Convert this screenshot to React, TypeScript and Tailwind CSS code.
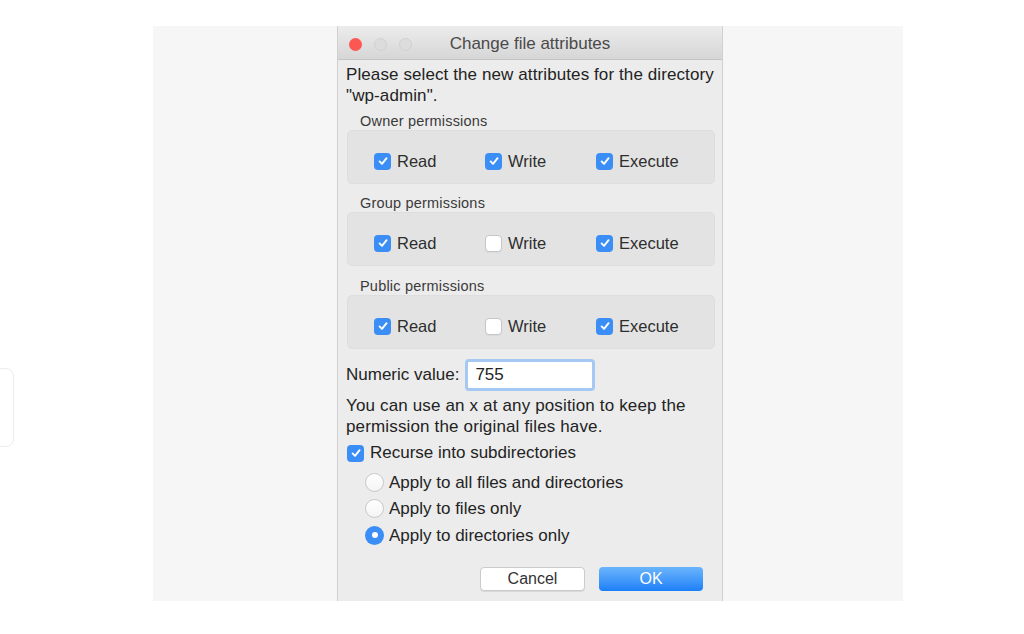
import React from "react"

const font = { fontFamily: '"Liberation Sans", Arial, sans-serif' }

function Check({ on }: { on: boolean }) {
  if (!on)
    return (
      <span className="h-[17px] w-[17px] shrink-0 rounded-[4px] border border-[#c6c6c6] bg-white shadow-[0_1px_0_rgba(0,0,0,0.04)]" />
    )
  return (
    <span className="flex h-[17px] w-[17px] shrink-0 items-center justify-center rounded-[4px] bg-[#3b8ef5]">
      <svg width="12" height="12" viewBox="0 0 12 12" fill="none">
        <path d="M2.6 6.4 L5 8.8 L9.6 3.2" stroke="white" strokeWidth="1.9" strokeLinecap="round" strokeLinejoin="round" />
      </svg>
    </span>
  )
}

function Radio({ on }: { on: boolean }) {
  if (on)
    return (
      <span className="flex h-[19px] w-[19px] shrink-0 items-center justify-center rounded-full bg-[#3b8ef5]">
        <span className="h-[6px] w-[6px] rounded-full bg-white" />
      </span>
    )
  return <span className="h-[19px] w-[19px] shrink-0 rounded-full border border-[#c8c8c8] bg-gradient-to-b from-white to-[#f4f4f4]" />
}

function Group({ title, perms, top }: { title: string; perms: boolean[]; top: string }) {
  const names = ["Read", "Write", "Execute"]
  return (
    <div className={top}>
      <div className="pl-[14px] text-[14.5px] leading-[18px] tracking-[0.2px] text-[#3a3a3a]">{title}</div>
      <div className="ml-px grid grid-cols-[111px_111px_111px] rounded-[5px] border border-[#dedede] bg-[#e3e3e3] pb-[11px] pl-[26px] pt-[19px]">
        {names.map((n, i) => (
          <div key={n} className="flex h-[22px] items-center gap-[6px]">
            <Check on={perms[i]} />
            <span className="text-[16.5px] text-[#2e2e2e]">{n}</span>
          </div>
        ))}
      </div>
    </div>
  )
}

export default function App() {
  return (
    <div className="flex h-[634px] w-[1024px] overflow-hidden bg-white pt-[26px]" style={font}>
      <div className="w-[153px] shrink-0">
        <div className="-ml-[20px] mt-[342px] h-[79px] w-[34px] rounded-[8px] border border-[#ececec]" />
      </div>

      <div className="h-[575px] w-[750px] shrink-0 overflow-hidden bg-[#f6f6f6] pl-[184px]">
        <div className="flex h-full w-[386px] flex-col overflow-hidden border-x border-[#d0d0d0] bg-[#ececec]">
          {/* title bar */}
          <div className="relative flex h-[34px] shrink-0 items-center border-b border-[#c4c4c4] bg-gradient-to-b from-[#ececec] to-[#d6d6d6] pl-[11px] pt-[3px]">
            <div className="flex gap-[12px]">
              <span className="h-[13px] w-[13px] rounded-full bg-[#fc5753]" />
              <span className="h-[13px] w-[13px] rounded-full border border-[#d0d0d0] bg-[#dcdcdc]" />
              <span className="h-[13px] w-[13px] rounded-full border border-[#d0d0d0] bg-[#dcdcdc]" />
            </div>
            <div className="absolute inset-0 flex items-center justify-center pt-[3px] text-[17px] text-[#4a4a4a]">
              Change file attributes
            </div>
          </div>

          <div className="flex shrink-0 flex-col pl-[8px] pr-[7px] pt-[4px] text-[17px] text-[#232323]">
            <p className="whitespace-nowrap leading-[21px] tracking-[0.1px]">
              Please select the new attributes for the directory
              <br />
              "wp-admin".
            </p>

            <Group top="mt-[6px]" title="Owner permissions" perms={[true, true, true]} />
            <Group top="mt-[10px]" title="Group permissions" perms={[true, false, true]} />
            <Group top="mt-[11px]" title="Public permissions" perms={[true, false, true]} />

            <div className="mt-[10px] flex items-center gap-[6px]">
              <span>Numeric value:</span>
              <div className="flex h-[32px] w-[130px] items-center rounded-[4px] border-[3px] border-[#a6c9f4] bg-white pl-[7px]">
                <span className="text-[17px] text-[#232323]">755</span>
              </div>
            </div>

            <p className="mt-[4px] whitespace-nowrap leading-[21px] tracking-[0.15px]">
              You can use an x at any position to keep the
              <br />
              permission the original files have.
            </p>

            <div className="ml-px mt-[5px] flex h-[22px] items-center gap-[6px]">
              <Check on />
              <span>Recurse into subdirectories</span>
            </div>

            <div className="ml-[19px] mt-[5px] flex flex-col">
              {[
                ["Apply to all files and directories", false],
                ["Apply to files only", false],
                ["Apply to directories only", true],
              ].map(([label, on]) => (
                <div key={label as string} className="flex h-[26.5px] items-center gap-[5px]">
                  <Radio on={on as boolean} />
                  <span>{label as string}</span>
                </div>
              ))}
            </div>

            <div className="mr-[12px] mt-[18px] flex justify-end gap-[14px]">
              <button className="flex h-[24px] w-[105px] items-center justify-center rounded-[4px] border border-[#cbcbcb] bg-white text-[16px] text-[#333] shadow-[0_1px_0_rgba(0,0,0,0.08)]">
                Cancel
              </button>
              <button className="flex h-[24px] w-[104px] items-center justify-center rounded-[4px] bg-gradient-to-b from-[#6ab4fb] to-[#1a80f8] text-[16px] text-white">
                OK
              </button>
            </div>
          </div>
        </div>
      </div>
    </div>
  )
}
